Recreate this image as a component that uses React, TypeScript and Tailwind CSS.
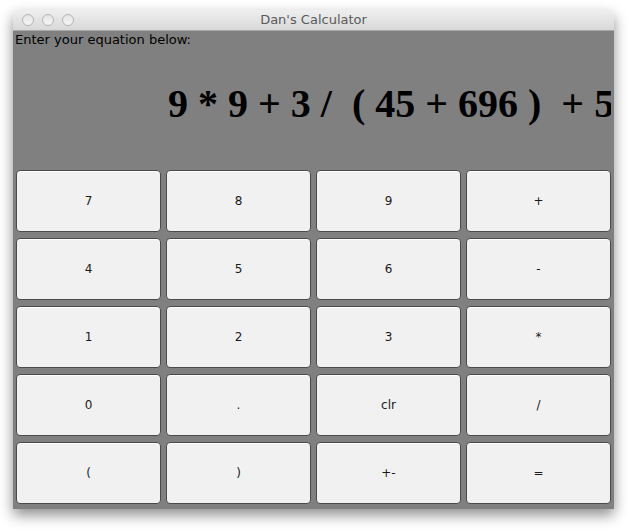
const keys = [
  "7", "8", "9", "+",
  "4", "5", "6", "-",
  "1", "2", "3", "*",
  "0", ".", "clr", "/",
  "(", ")", "+-", "=",
];

function TrafficLight() {
  return (
    <span className="h-[12px] w-[12px] rounded-full border border-[#b4b4b4] bg-gradient-to-b from-[#e4e4e4] to-[#f6f6f6]" />
  );
}

export default function App() {
  return (
    <div className="h-[530px] w-[628px] bg-white pl-[13px] pt-[10px] font-['DejaVu_Sans',sans-serif]">
      <div className="w-[601px] overflow-hidden rounded-t-[5px] shadow-[0_6px_14px_rgba(0,0,0,0.45)]">
        {/* title bar */}
        <div className="relative flex h-[21px] items-center border-b border-[#a8a8a8] bg-gradient-to-b from-[#efefef] to-[#d8d8d8] pl-[9px]">
          <div className="flex gap-[8px]">
            <TrafficLight />
            <TrafficLight />
            <TrafficLight />
          </div>
          <div className="absolute inset-0 flex items-center justify-center text-[13px] text-[#5a5a5a]">
            Dan's Calculator
          </div>
        </div>

        <div className="bg-[#808080] px-[3px] pb-[5px]">
          {/* display */}
          <div className="h-[139px] overflow-hidden">
            <div className="-ml-[1px] pt-[1px] text-[13px] leading-[15px] text-black">
              Enter your equation below:
            </div>
            <div className="mt-[33px] whitespace-pre pl-[152px] font-['Liberation_Serif',serif] text-[40px] font-bold leading-[48px] text-black">
              {"9 * 9 + 3 /  ( 45 + 696 )  + 5"}
            </div>
          </div>

          {/* keypad */}
          <div className="grid grid-cols-4 gap-x-[5px] gap-y-[6px]">
            {keys.map((k) => (
              <button
                key={k}
                className="flex h-[62px] items-center justify-center rounded-[4px] border border-[#4a4a4a] bg-[#f1f1f1] text-[12px] text-[#1a1a1a] shadow-[inset_0_1px_0_#ffffff]"
              >
                {k}
              </button>
            ))}
          </div>
        </div>
      </div>
    </div>
  );
}
